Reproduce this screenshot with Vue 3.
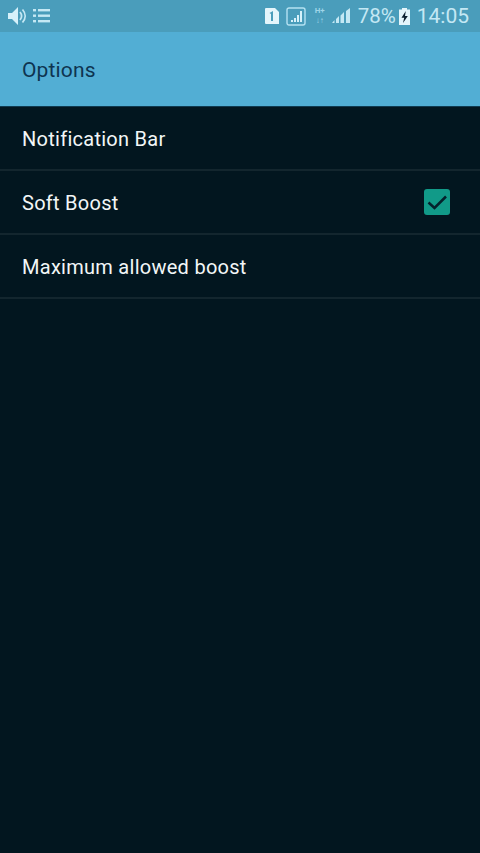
<script setup>
const rows = [
	{ label: "Notification Bar", checked: false },
	{ label: "Soft Boost", checked: true },
	{ label: "Maximum allowed boost", checked: false },
];
</script>

<template>
	<div class="screen">
		<header class="status">
			<div class="status__left">
				<svg width="20" height="20" viewBox="0 0 20 20">
					<path d="M1 7h4l6-6v18l-6-6H1z" fill="#d6f1fa" />
					<path d="M13 6c2 2.500 2 5.500 0 8M15.500 3.500c3.500 4 3.500 9 0 13" fill="none" stroke="#c4e8f4" stroke-width="1.800" />
				</svg>
				<svg width="17" height="16" viewBox="0 0 17 16">
					<g fill="#c4e8f4">
						<rect x="0" y="1" width="3" height="2.400" />
						<rect x="5" y="1" width="12" height="2.400" />
						<rect x="0" y="6.500" width="3" height="2.400" />
						<rect x="5" y="6.500" width="12" height="2.400" />
						<rect x="0" y="12" width="3" height="2.400" />
						<rect x="5" y="12" width="12" height="2.400" />
					</g>
				</svg>
			</div>
			<div class="status__right">
				<svg class="ic-sim" width="16" height="16" viewBox="0 0 16 16">
					<path d="M2 0h9l4 4v12H2a1 1 0 0 1-1-1V1a1 1 0 0 1 1-1z" fill="#e4f5fb" />
					<path d="M5.500 5l3.500-2v10H7V6z" fill="#4a9dbb" />
				</svg>
				<svg class="ic-wifi" width="20" height="19" viewBox="0 0 20 19">
					<rect x="1" y="1" width="18" height="17" rx="2" fill="none" stroke="#b5e2f2" stroke-width="1.400" />
					<path d="M5 15h2v-2H5zM8 15h2v-4H8zM11 15h2V8h-2zM14 15h2V4h-2z" fill="#d6f1fa" />
				</svg>
				<span class="net">H+<br />↓↑</span>
				<svg class="ic-signal" width="18" height="16" viewBox="0 0 18 16">
					<path d="M0 15h2.500v-3L0 15zM4 15h3V8L4 11zM8.500 15H12V4L8.500 7.500zM14 15h4V0l-4 3z" fill="#c4e8f4" />
				</svg>
				<span class="pct">78%</span>
				<svg class="ic-batt" width="11" height="17" viewBox="0 0 11 17">
					<path d="M3 0h5v1.500h3V17H0V1.500h3z" fill="#e4f5fb" />
					<path d="M6.800 3L2.500 9.800h2.700L4 15l4.800-7H6z" fill="#0c2030" />
				</svg>
				<span class="time">14:05</span>
			</div>
		</header>
		<div class="toolbar">Options</div>
		<ul class="list">
			<li v-for="row in rows" :key="row.label" class="list__row">
				<span>{{ row.label }}</span>
				<span v-if="row.checked" class="check">
					<svg width="26" height="26" viewBox="0 0 26 26">
						<path d="M4.500 13.500l6 5.500L22 7.500" fill="none" stroke="#04222c" stroke-width="2.500" />
					</svg>
				</span>
			</li>
		</ul>
	</div>
</template>

<style>
html,
body {
	margin: 0;
	background: #02161f;
}
</style>

<style scoped>
.screen {
	width: 480px;
	height: 853px;
	background: #02161f;
	font-family: Roboto, "Liberation Sans", sans-serif;
	overflow: hidden;
}

.status {
	height: 32px;
	box-sizing: border-box;
	display: flex;
	justify-content: space-between;
	align-items: center;
	padding: 0 11px 0 7px;
	background: #4a9dbb;
	color: #c4e8f4;
}

.status__left {
	display: flex;
	align-items: center;
	gap: 6px;
}

.status__right {
	display: flex;
	align-items: center;
}

.ic-sim {
	margin-right: 6px;
}

.ic-wifi {
	margin-right: 8px;
}

.net {
	width: 12px;
	margin-right: 6px;
	font-size: 8px;
	line-height: 10px;
	font-weight: 700;
	text-align: center;
	color: #9fd5e8;
}

.ic-signal {
	margin-right: 8px;
}

.pct {
	font-size: 20.5px;
	margin-right: 3px;
}

.ic-batt {
	margin-right: 7px;
}

.time {
	font-size: 21px;
}

.toolbar {
	height: 75px;
	box-sizing: border-box;
	display: flex;
	align-items: center;
	padding: 2px 22px 0;
	background: #52aed4;
	border-bottom: 1px solid #0f3a50;
	color: #0e3450;
	font-size: 21px;
	letter-spacing: 0.15px;
}

.list {
	list-style: none;
	margin: 0;
	padding: 0;
}

.list__row {
	height: 64px;
	box-sizing: border-box;
	display: flex;
	justify-content: space-between;
	align-items: center;
	padding: 0 30px 0 22px;
	border-bottom: 2px solid #13262e;
	color: #f2f6f7;
	font-size: 20px;
	letter-spacing: 0.27px;
}

.list__row > span:first-child {
	padding-top: 1px;
}

.check {
	width: 26px;
	height: 26px;
	border-radius: 3px;
	background: #119a88;
}

.check svg {
	display: block;
}
</style>
